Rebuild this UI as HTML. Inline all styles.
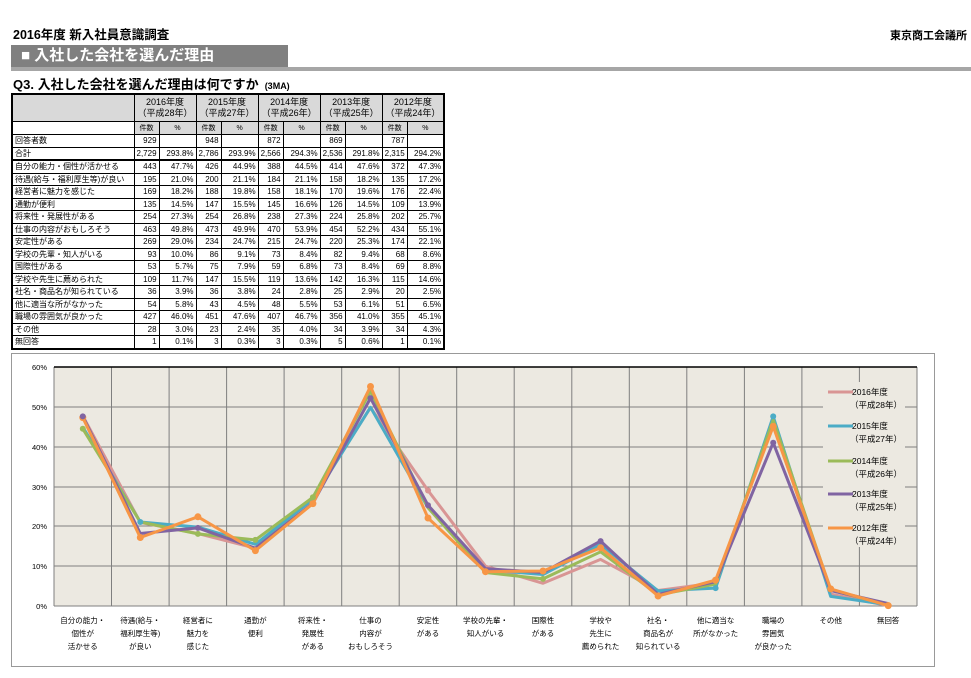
<!DOCTYPE html>
<html><head><meta charset="utf-8"><style>
body{margin:0;width:971px;height:678px;background:#fff;position:relative;overflow:hidden;font-family:"Liberation Sans","Noto Sans CJK JP",sans-serif;color:#000}
.a{position:absolute;white-space:nowrap}
table{position:absolute;left:11px;top:93px;border-collapse:collapse;border:2px solid #000;table-layout:fixed;font-size:8px}
td{border:1px solid #000;padding:0 2px;height:11.5px;line-height:11px;text-align:right;overflow:hidden;white-space:nowrap}
td.l{text-align:left}
tr.h td{background:#d9d9d9;text-align:center;font-size:9px;line-height:11px;height:26px}
tr.s td{background:#d9d9d9;text-align:center;font-size:7px;height:12px}
tr.t td{border-bottom:2px solid #000}
</style></head><body>
<div class="a" style="left:13px;top:29px;font-size:12.5px;line-height:13px;font-weight:bold">2016年度 新入社員意識調査</div>
<div class="a" style="right:4px;top:30px;font-size:11px;line-height:12px;font-weight:bold">東京商工会議所</div>
<div class="a" style="left:11px;top:45px;width:277px;height:22px;background:#808080;color:#fff;font-size:15px;font-weight:bold;line-height:22px;padding-left:10px;box-sizing:border-box">■ 入社した会社を選んだ理由</div>
<div class="a" style="left:11px;top:67px;width:960px;height:4px;background:#a6a6a6"></div>
<div class="a" style="left:13px;top:78px;font-size:13px;line-height:14px;font-weight:bold">Q3. 入社した会社を選んだ理由は何ですか <span style="font-size:9px">&nbsp;(3MA)</span></div>
<table>
<colgroup><col style="width:122px"><col style="width:25px"><col style="width:37px"><col style="width:25px"><col style="width:37px"><col style="width:25px"><col style="width:37px"><col style="width:25px"><col style="width:37px"><col style="width:25px"><col style="width:37px"></colgroup>
<tr class="h"><td></td><td colspan="2">2016年度<br>（平成28年）</td><td colspan="2">2015年度<br>（平成27年）</td><td colspan="2">2014年度<br>（平成26年）</td><td colspan="2">2013年度<br>（平成25年）</td><td colspan="2">2012年度<br>（平成24年）</td></tr>
<tr class="s"><td style="background:#fff"></td><td>件数</td><td>%</td><td>件数</td><td>%</td><td>件数</td><td>%</td><td>件数</td><td>%</td><td>件数</td><td>%</td></tr>
<tr><td class="l">回答者数</td><td>929</td><td></td><td>948</td><td></td><td>872</td><td></td><td>869</td><td></td><td>787</td><td></td></tr>
<tr class="t"><td class="l">合計</td><td>2,729</td><td>293.8%</td><td>2,786</td><td>293.9%</td><td>2,566</td><td>294.3%</td><td>2,536</td><td>291.8%</td><td>2,315</td><td>294.2%</td></tr>
<tr><td class="l">自分の能力・個性が活かせる</td><td>443</td><td>47.7%</td><td>426</td><td>44.9%</td><td>388</td><td>44.5%</td><td>414</td><td>47.6%</td><td>372</td><td>47.3%</td></tr>
<tr><td class="l">待遇(給与・福利厚生等)が良い</td><td>195</td><td>21.0%</td><td>200</td><td>21.1%</td><td>184</td><td>21.1%</td><td>158</td><td>18.2%</td><td>135</td><td>17.2%</td></tr>
<tr><td class="l">経営者に魅力を感じた</td><td>169</td><td>18.2%</td><td>188</td><td>19.8%</td><td>158</td><td>18.1%</td><td>170</td><td>19.6%</td><td>176</td><td>22.4%</td></tr>
<tr><td class="l">通勤が便利</td><td>135</td><td>14.5%</td><td>147</td><td>15.5%</td><td>145</td><td>16.6%</td><td>126</td><td>14.5%</td><td>109</td><td>13.9%</td></tr>
<tr><td class="l">将来性・発展性がある</td><td>254</td><td>27.3%</td><td>254</td><td>26.8%</td><td>238</td><td>27.3%</td><td>224</td><td>25.8%</td><td>202</td><td>25.7%</td></tr>
<tr><td class="l">仕事の内容がおもしろそう</td><td>463</td><td>49.8%</td><td>473</td><td>49.9%</td><td>470</td><td>53.9%</td><td>454</td><td>52.2%</td><td>434</td><td>55.1%</td></tr>
<tr><td class="l">安定性がある</td><td>269</td><td>29.0%</td><td>234</td><td>24.7%</td><td>215</td><td>24.7%</td><td>220</td><td>25.3%</td><td>174</td><td>22.1%</td></tr>
<tr><td class="l">学校の先輩・知人がいる</td><td>93</td><td>10.0%</td><td>86</td><td>9.1%</td><td>73</td><td>8.4%</td><td>82</td><td>9.4%</td><td>68</td><td>8.6%</td></tr>
<tr><td class="l">国際性がある</td><td>53</td><td>5.7%</td><td>75</td><td>7.9%</td><td>59</td><td>6.8%</td><td>73</td><td>8.4%</td><td>69</td><td>8.8%</td></tr>
<tr><td class="l">学校や先生に薦められた</td><td>109</td><td>11.7%</td><td>147</td><td>15.5%</td><td>119</td><td>13.6%</td><td>142</td><td>16.3%</td><td>115</td><td>14.6%</td></tr>
<tr><td class="l">社名・商品名が知られている</td><td>36</td><td>3.9%</td><td>36</td><td>3.8%</td><td>24</td><td>2.8%</td><td>25</td><td>2.9%</td><td>20</td><td>2.5%</td></tr>
<tr><td class="l">他に適当な所がなかった</td><td>54</td><td>5.8%</td><td>43</td><td>4.5%</td><td>48</td><td>5.5%</td><td>53</td><td>6.1%</td><td>51</td><td>6.5%</td></tr>
<tr><td class="l">職場の雰囲気が良かった</td><td>427</td><td>46.0%</td><td>451</td><td>47.6%</td><td>407</td><td>46.7%</td><td>356</td><td>41.0%</td><td>355</td><td>45.1%</td></tr>
<tr><td class="l">その他</td><td>28</td><td>3.0%</td><td>23</td><td>2.4%</td><td>35</td><td>4.0%</td><td>34</td><td>3.9%</td><td>34</td><td>4.3%</td></tr>
<tr><td class="l">無回答</td><td>1</td><td>0.1%</td><td>3</td><td>0.3%</td><td>3</td><td>0.3%</td><td>5</td><td>0.6%</td><td>1</td><td>0.1%</td></tr>
</table>
<div class="a" style="left:11px;top:353px;width:924px;height:314px;border:1px solid #999;box-sizing:border-box"></div>
<svg class="a" style="left:0;top:0" width="971" height="678" font-family="Liberation Sans, Noto Sans CJK JP, sans-serif">
<rect x="54" y="367" width="863" height="239" fill="#ece9e1"/>
<g stroke="#7f7f7f" stroke-width="1">
<path d="M54 407H917M54 447H917M54 487H917M54 526H917M54 566H917M54 606H917"/>
<path d="M54 367V606M111.5 367V606M169.1 367V606M226.6 367V606M284.1 367V606M341.7 367V606M399.2 367V606M456.7 367V606M514.2 367V606M571.8 367V606M629.3 367V606M686.8 367V606M744.4 367V606M801.9 367V606M859.4 367V606M917 367V606"/>
</g>
<path d="M54 367H917" stroke="#000" stroke-width="1.5"/>
<g font-size="7.5" text-anchor="end" fill="#000"><text x="47" y="370">60%</text><text x="47" y="410">50%</text><text x="47" y="450">40%</text><text x="47" y="490">30%</text><text x="47" y="529">20%</text><text x="47" y="569">10%</text><text x="47" y="609">0%</text></g>
<g fill="none" stroke-width="3" stroke-linejoin="round">
<polyline stroke="#d99594" points="82.8,416 140.3,522.4 197.9,533.5 255.4,548.2 312.9,497.3 370.5,407.6 428,490.5 485.5,566.2 543,583.3 600.6,559.4 658.1,590.5 715.6,582.9 773.2,422.8 830.7,594.1 888.2,605.6"/>
<polyline stroke="#4bacc6" points="82.8,427.2 140.3,522 197.9,527.1 255.4,544.3 312.9,499.3 370.5,407.3 428,507.6 485.5,569.8 543,574.5 600.6,544.3 658.1,590.9 715.6,588.1 773.2,416.4 830.7,596.4 888.2,604.8"/>
<polyline stroke="#9bbb59" points="82.8,428.8 140.3,522 197.9,533.9 255.4,539.9 312.9,497.3 370.5,391.3 428,507.6 485.5,572.5 543,578.9 600.6,551.8 658.1,594.8 715.6,584.1 773.2,420 830.7,590.1 888.2,604.8"/>
<polyline stroke="#8064a2" points="82.8,416.4 140.3,533.5 197.9,527.9 255.4,548.2 312.9,503.2 370.5,398.1 428,505.2 485.5,568.6 543,572.5 600.6,541.1 658.1,594.4 715.6,581.7 773.2,442.7 830.7,590.5 888.2,603.6"/>
<polyline stroke="#f79646" points="82.8,417.6 140.3,537.5 197.9,516.8 255.4,550.6 312.9,503.6 370.5,386.5 428,518 485.5,571.7 543,571 600.6,547.8 658.1,596 715.6,580.1 773.2,426.4 830.7,588.9 888.2,605.6"/>
</g>
<g fill="#f79646"><circle cx="82.8" cy="417.6" r="3.5"/><circle cx="140.3" cy="537.5" r="3.5"/><circle cx="197.9" cy="516.8" r="3.5"/><circle cx="255.4" cy="550.6" r="3.5"/><circle cx="312.9" cy="503.6" r="3.5"/><circle cx="370.5" cy="386.5" r="3.5"/><circle cx="428" cy="518" r="3.5"/><circle cx="485.5" cy="571.7" r="3.5"/><circle cx="543" cy="571" r="3.5"/><circle cx="600.6" cy="547.8" r="3.5"/><circle cx="658.1" cy="596" r="3.5"/><circle cx="715.6" cy="580.1" r="3.5"/><circle cx="773.2" cy="426.4" r="3.5"/><circle cx="830.7" cy="588.9" r="3.5"/><circle cx="888.2" cy="605.6" r="3.5"/></g>
<g fill="#8064a2"><circle cx="82.8" cy="416.4" r="3"/><circle cx="197.9" cy="527.9" r="3"/><circle cx="370.5" cy="398.1" r="3"/><circle cx="428" cy="505.2" r="3"/><circle cx="600.6" cy="541.1" r="3"/><circle cx="773.2" cy="442.7" r="3"/></g>
<g fill="#9bbb59"><circle cx="82.8" cy="428.8" r="3"/><circle cx="197.9" cy="533.9" r="3"/><circle cx="255.4" cy="539.9" r="3"/><circle cx="312.9" cy="497.3" r="3"/><circle cx="543" cy="578.9" r="3"/></g>
<g fill="#4bacc6"><circle cx="773.2" cy="416.4" r="3"/><circle cx="715.6" cy="588.1" r="3"/><circle cx="140.3" cy="522" r="3"/></g>
<circle cx="428" cy="490.5" r="3" fill="#d99594"/>
<rect x="823" y="382" width="82" height="165" fill="#ece9e1"/>
<g stroke-width="3">
<path d="M828 392H853" stroke="#d99594"/><path d="M828 426H853" stroke="#4bacc6"/><path d="M828 461H853" stroke="#9bbb59"/><path d="M828 494H853" stroke="#8064a2"/><path d="M828 528H853" stroke="#f79646"/>
</g>
<g fill="#000" font-size="8.5"><text x="852" y="395">2016年度</text><text x="850" y="408">（平成28年）</text><text x="852" y="429">2015年度</text><text x="850" y="442">（平成27年）</text><text x="852" y="464">2014年度</text><text x="850" y="477">（平成26年）</text><text x="852" y="497">2013年度</text><text x="850" y="510">（平成25年）</text><text x="852" y="531">2012年度</text><text x="850" y="544">（平成24年）</text></g>
<g fill="#000" font-size="7.5" text-anchor="middle">
<text x="82.8" y="623">自分の能力・</text><text x="82.8" y="636">個性が</text><text x="82.8" y="649">活かせる</text>
<text x="140.3" y="623">待遇(給与・</text><text x="140.3" y="636">福利厚生等)</text><text x="140.3" y="649">が良い</text>
<text x="197.9" y="623">経営者に</text><text x="197.9" y="636">魅力を</text><text x="197.9" y="649">感じた</text>
<text x="255.4" y="623">通勤が</text><text x="255.4" y="636">便利</text>
<text x="312.9" y="623">将来性・</text><text x="312.9" y="636">発展性</text><text x="312.9" y="649">がある</text>
<text x="370.5" y="623">仕事の</text><text x="370.5" y="636">内容が</text><text x="370.5" y="649">おもしろそう</text>
<text x="428" y="623">安定性</text><text x="428" y="636">がある</text>
<text x="485.5" y="623">学校の先輩・</text><text x="485.5" y="636">知人がいる</text>
<text x="543" y="623">国際性</text><text x="543" y="636">がある</text>
<text x="600.6" y="623">学校や</text><text x="600.6" y="636">先生に</text><text x="600.6" y="649">薦められた</text>
<text x="658.1" y="623">社名・</text><text x="658.1" y="636">商品名が</text><text x="658.1" y="649">知られている</text>
<text x="715.6" y="623">他に適当な</text><text x="715.6" y="636">所がなかった</text>
<text x="773.2" y="623">職場の</text><text x="773.2" y="636">雰囲気</text><text x="773.2" y="649">が良かった</text>
<text x="830.7" y="623">その他</text>
<text x="888.2" y="623">無回答</text>
</g>
</svg>
</body></html>
